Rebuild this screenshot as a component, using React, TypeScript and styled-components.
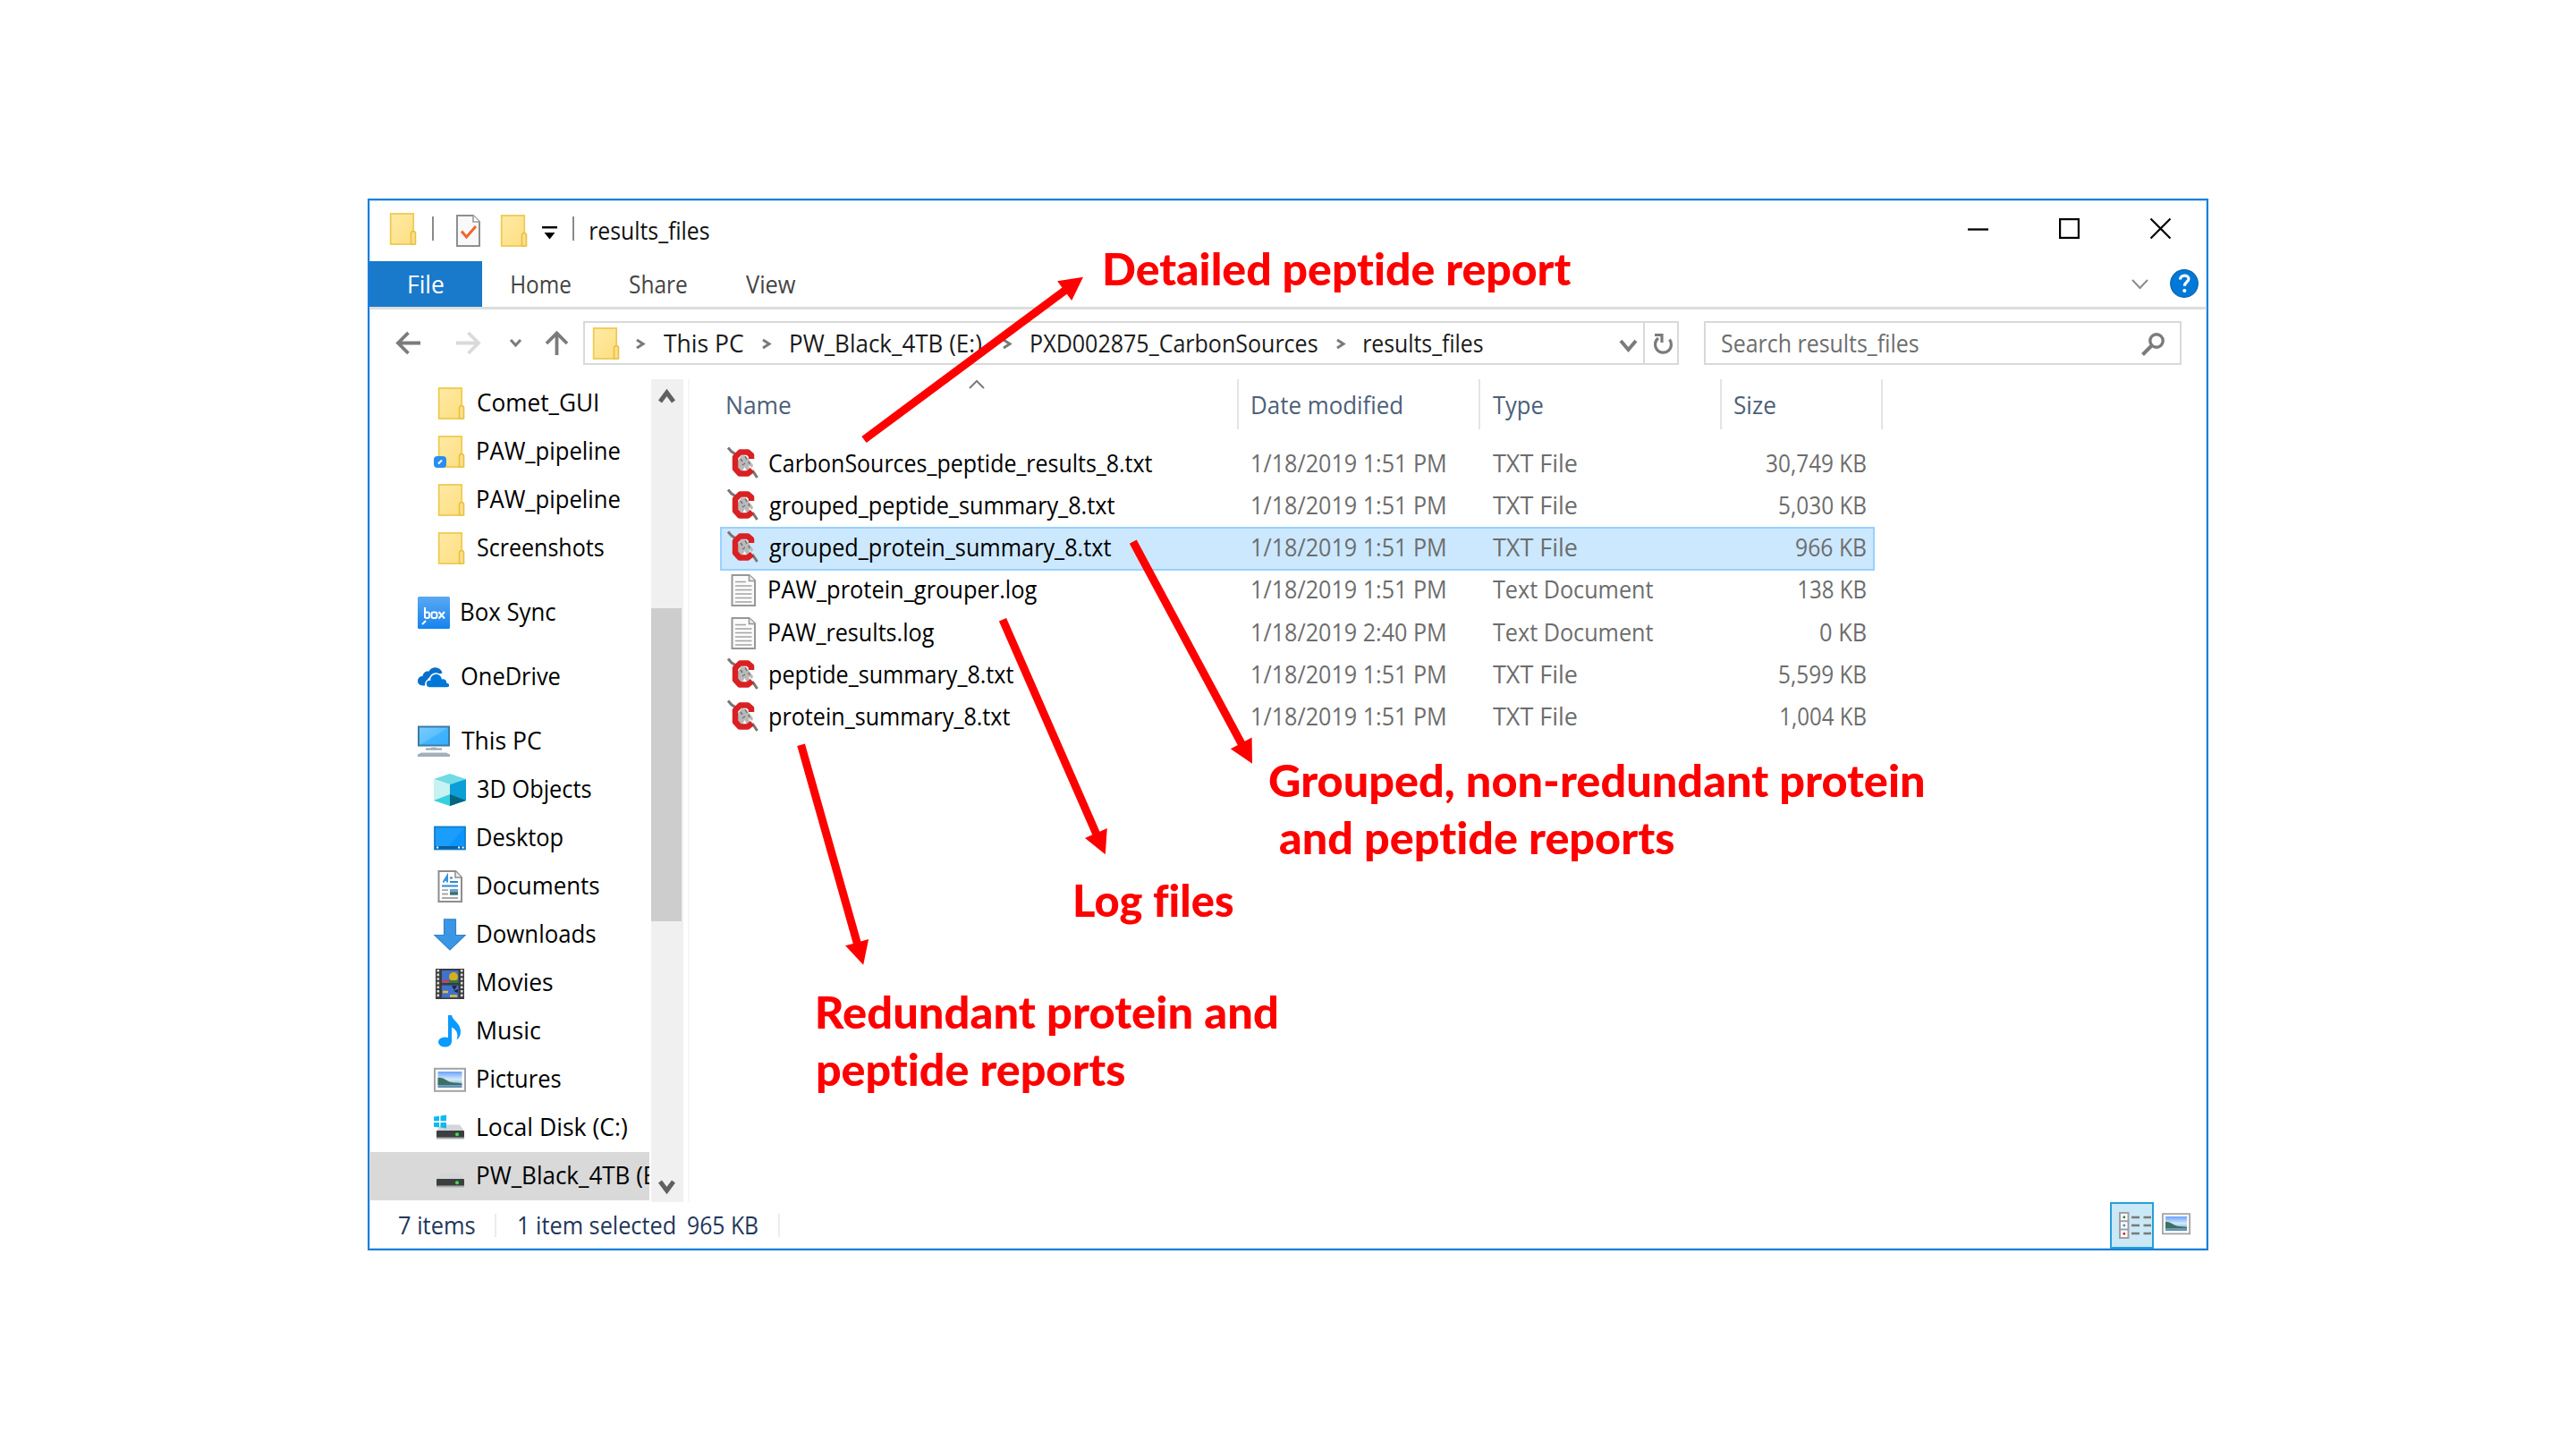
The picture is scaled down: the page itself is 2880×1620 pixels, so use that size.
import React, { useLayoutEffect, useRef, useState } from 'react';
import styled, { createGlobalStyle } from 'styled-components';

const ui = `"Open Sans", "Noto Sans", sans-serif`;

const Global = createGlobalStyle`
  html, body { margin: 0; background: #fff; }
  * { box-sizing: border-box; }
`;

/* ---------- text that is fitted to a known ink width ---------- */

const Slot = styled.span<{ $w: number; $ml?: number }>`
  display: block;
  flex: none;
  width: ${(p) => p.$w}px;
  margin-left: ${(p) => p.$ml ?? 0}px;
`;
const Ink = styled.span`
  display: inline-block;
  white-space: pre;
  transform-origin: 0 50%;
`;

function Fit({ w, ml, children }: { w: number; ml?: number; children: string }) {
  const ref = useRef<HTMLSpanElement>(null);
  const [transform, setTransform] = useState('none');
  useLayoutEffect(() => {
    const cs = getComputedStyle(ref.current!);
    const ctx = document.createElement('canvas').getContext('2d')! as CanvasRenderingContext2D & { letterSpacing: string };
    ctx.font = `${cs.fontWeight} ${cs.fontSize} ${cs.fontFamily}`;
    if (cs.letterSpacing !== 'normal') ctx.letterSpacing = cs.letterSpacing;
    const m = ctx.measureText(children);
    const scale = w / (m.actualBoundingBoxLeft + m.actualBoundingBoxRight);
    setTransform(`translateX(${m.actualBoundingBoxLeft * scale}px) scaleX(${scale})`);
  }, [w, children]);
  return (
    <Slot $w={w} $ml={ml}>
      <Ink ref={ref} style={{ transform }}>{children}</Ink>
    </Slot>
  );
}

/* ---------- layout ---------- */

const Stage = styled.div`
  position: relative;
  width: 2880px;
  height: 1620px;
  padding: 222px 0 0 411px;
  overflow: hidden;
  background: #fff;
`;
const Win = styled.div`
  width: 2058px;
  height: 1176px;
  border: 2px solid #1a80d9;
  box-shadow: inset 0 0 0 1px #c3def4;
  display: flex;
  flex-direction: column;
  font: 400 26.5px/36px ${ui};
  color: #111;
`;
const TitleBar = styled.div`
  height: 68px;
  display: flex;
  align-items: center;
  padding: 0 40px 0 18px;
`;
const Buttons = styled.div`
  margin-left: auto;
  display: flex;
  align-items: center;
  gap: 79px;
  margin-top: -5px;
`;
const TitleText = styled.div`
  margin: -1px 0 0 18px;
`;
const VBar = styled.i<{ $ml: number; $h: number; $c: string; $mt?: number }>`
  width: 2px;
  flex: none;
  height: ${(p) => p.$h}px;
  margin-left: ${(p) => p.$ml}px;
  margin-top: ${(p) => p.$mt ?? 0}px;
  background: ${(p) => p.$c};
`;
const Ribbon = styled.div`
  height: 54px;
  flex: none;
  border-bottom: 3px solid #dcdddd;
  display: flex;
  align-items: center;
  color: #444;
  padding-right: 9px;
`;
const FileTab = styled.div`
  width: 126px;
  height: 51px;
  padding-left: 44px;
  display: flex;
  align-items: center;
  background: #1979ca;
  color: #fff;
`;
const NavBar = styled.div`
  height: 78px;
  flex: none;
  display: flex;
  padding: 13px 0 0 30px;
`;
const Arrows = styled.div`
  width: 209px;
  height: 49px;
  display: flex;
  align-items: center;
`;
const Field = styled.div<{ $w: number }>`
  width: ${(p) => p.$w}px;
  height: 49px;
  border: 2px solid #d9d9d9;
  display: flex;
  align-items: center;
  flex: none;
`;
const Address = styled(Field)`
  color: #1a1a1a;
  padding-left: 4px;
`;
const Refresh = styled.div`
  margin-left: auto;
  width: 38px;
  height: 45px;
  border-left: 2px solid #d9d9d9;
  display: flex;
  align-items: center;
  justify-content: center;
`;
const Search = styled(Field)`
  margin-left: 28px;
  padding-left: 18px;
  color: #6d6d6d;
`;
const Body = styled.div`
  height: 920px;
  flex: none;
  display: flex;
`;
const Tree = styled.div`
  width: 315px;
  overflow: hidden;
`;
const TreeRow = styled.div<{ $nested: boolean; $gap: boolean; $on?: boolean }>`
  width: 313px;
  height: 54px;
  overflow: hidden;
  margin-top: ${(p) => (p.$gap ? 18 : 0)}px;
  padding-left: ${(p) => (p.$nested ? 72 : 54)}px;
  display: flex;
  align-items: center;
  gap: 13px;
  background: ${(p) => (p.$on ? '#d9d9d9' : 'transparent')};
  color: #000;
`;
const TreeLabel = styled.div`
  margin-top: -2px;
`;
const Scroll = styled.div`
  width: 36px;
  background: #f0f0f0;
  display: flex;
  flex-direction: column;
  justify-content: space-between;
  padding: 14px 0 12px;
`;
const Thumb = styled.div`
  width: 34px;
  height: 350px;
  margin: 230px 0 auto;
  background: #cdcdcd;
`;
const Pane = styled.div`
  flex: 1;
  margin-left: 5px;
  border-left: 2px solid #f6f6f6;
`;
const Head = styled.div`
  height: 70.5px;
  display: flex;
  color: #4c607a;
`;
const Col = styled.div<{ $w: number; $pl: number }>`
  width: ${(p) => p.$w}px;
  height: 56px;
  flex: none;
  padding-left: ${(p) => p.$pl}px;
  border-right: 2px solid #e4e4e4;
  display: flex;
  align-items: center;
  padding-top: 1px;
`;
const SortMark = styled.div`
  align-self: flex-start;
  margin-left: 199px;
  line-height: 0;
`;
const FileRow = styled.div<{ $on: boolean }>`
  width: 1291px;
  height: 49.25px;
  margin: 0 0 -2px 33.5px;
  border: 2px solid ${(p) => (p.$on ? '#99d1ff' : 'transparent')};
  background: ${(p) => (p.$on ? '#cce8ff' : 'transparent')};
  display: flex;
  align-items: center;
  padding-left: 6px;
  color: #6d6d6d;
`;
const Cell = styled.div<{ $w: number; $right?: boolean; $dark?: boolean }>`
  width: ${(p) => p.$w}px;
  flex: none;
  display: flex;
  justify-content: ${(p) => (p.$right ? 'flex-end' : 'flex-start')};
  color: ${(p) => (p.$dark ? '#000' : '#6d6d6d')};
  margin-top: -3px;
`;
const Status = styled.div`
  height: 52px;
  flex: none;
  display: flex;
  align-items: center;
  padding-left: 33px;
  color: #22375c;
`;
const Views = styled.div`
  margin-left: auto;
  padding-right: 18px;
  display: flex;
  align-items: center;
  gap: 9px;
`;
const ViewOn = styled.div`
  width: 49px;
  height: 52px;
  border: 2px solid #26a0da;
  background: #cbe8f6;
  display: flex;
  align-items: center;
  justify-content: flex-end;
`;
const Svg = styled.svg<{ $ml?: number; $mt?: number }>`
  display: block;
  flex: none;
  overflow: visible;
  margin-left: ${(p) => p.$ml ?? 0}px;
  margin-top: ${(p) => p.$mt ?? 0}px;
`;
const Overlay = styled.svg`
  position: absolute;
  inset: 0;
`;
const Note = styled.div<{ $x: number; $y: number }>`
  position: absolute;
  left: ${(p) => p.$x}px;
  top: ${(p) => p.$y}px;
  font: 900 48.5px/64px Lato, "Liberation Sans", sans-serif;
  letter-spacing: 0.02px;
  font-variant-ligatures: none;
  color: #f00;
`;

/* ---------- icons ---------- */

type IP = { ml?: number; mt?: number };

const Folder = ({ ml, mt, badge }: IP & { badge?: boolean }) => (
  <Svg $ml={ml} $mt={mt} width="36" height="36" viewBox="0 0 36 36">
    <defs>
      <linearGradient id="fold" x1="0" y1="0" x2="1" y2="1">
        <stop offset="0" stopColor="#ffeaa6" />
        <stop offset="1" stopColor="#fddf81" />
      </linearGradient>
    </defs>
    <rect x="5.7" y="1" width="25.5" height="34" fill="url(#fold)" stroke="#efca53" strokeWidth="1.8" />
    <path d="M28.5 35V22.5l1-1.7h3l1 1.7V35z" fill="#fbe08a" stroke="#e9bf46" strokeWidth="1.6" />
    {badge && (
      <>
        <rect x="0" y="23" width="14" height="13" rx="4" fill="#2a8df0" />
        <path d="M5 31.5l4-4" stroke="#fff" strokeWidth="2" />
      </>
    )}
  </Svg>
);
const CheckDoc = ({ ml, mt }: IP) => (
  <Svg $ml={ml} $mt={mt} width="27" height="36" viewBox="0 0 27 36">
    <path d="M1 1h18l7 7v27H1z" fill="#f8f9fa" stroke="#8f8f8f" strokeWidth="2" />
    <path d="M19 1v7h7" fill="#fff" stroke="#9a9a9a" strokeWidth="1.6" />
    <path d="M6 18.5l5.5 6.5L22 13" fill="none" stroke="#f2652a" strokeWidth="3" />
  </Svg>
);
const Chev = ({ d, w, h, c, sw, ml, mt }: IP & { d: 'u' | 'd' | 'r'; w: number; h: number; c: string; sw: number }) => {
  const pts = d === 'd' ? `1,1 ${w / 2},${h - 1} ${w - 1},1` : d === 'u' ? `1,${h - 1} ${w / 2},1 ${w - 1},${h - 1}` : `1,1 ${w - 1},${h / 2} 1,${h - 1}`;
  return (
    <Svg $ml={ml} $mt={mt} width={w} height={h}>
      <polyline points={pts} fill="none" stroke={c} strokeWidth={sw} />
    </Svg>
  );
};
const Crumb = ({ ml }: IP) => <Chev d="r" w={9} h={11} c="#7a7a7a" sw={3} ml={ml} mt={2} />;

const Dir = ({ d, c, ml }: IP & { d: string; c: string }) => (
  <Svg $ml={ml} width="27" height="27" viewBox="0 0 27 27">
    <path d={d} fill="none" stroke={c} strokeWidth="3.8" />
  </Svg>
);

const icons: Record<string, React.ReactNode> = {
  folder: <Folder />,
  folderSync: <Folder badge />,
  box: (
    <Svg width="36" height="36" viewBox="0 0 36 36">
      <defs>
        <linearGradient id="bx" x1="0" y1="0" x2="0" y2="1">
          <stop offset="0" stopColor="#5aa9f3" />
          <stop offset="1" stopColor="#1583ee" />
        </linearGradient>
      </defs>
      <rect width="36" height="36" rx="1.5" fill="url(#bx)" />
      <g fill="none" stroke="#fff" strokeWidth="2">
        <path d="M8 12v12" />
        <rect x="8" y="17.5" width="5" height="6.5" rx="2" />
        <rect x="15.5" y="17.5" width="6" height="6.5" rx="2" />
        <path d="M23.5 17l6.5 7.500M30 17l-6.500 7.500" />
      </g>
      <path d="M5 31l4-4" stroke="#fff" strokeWidth="2" />
    </Svg>
  ),
  onedrive: (
    <Svg width="36" height="24" viewBox="0 0 36 24" $mt={1}>
      <path d="M6 20.500C1 20.500 0 17 0 15.500C0 12 2.500 10 5.500 10C6 6 9 4 12.500 4.500C15 0 20 -.5 23 1C25.500 2 27 4 27.500 6.500L12 12L8 20.500z" fill="#0a6fc9" />
      <path d="M13.500 23C10 23 9 20.500 9 18.500C9 16 11 14 13.500 14C13.500 9.500 17 7 20.500 7C24 7 27 9.500 27.500 12.500C31 12 33 14.500 33 17C35 17.200 36 18.500 36 20.200C36 22 34.800 23 33 23z" fill="#0078d7" stroke="#fff" strokeWidth="1.6" />
    </Svg>
  ),
  pc: (
    <Svg width="36" height="36" viewBox="0 0 36 36">
      <defs>
        <linearGradient id="scr" x1="0" y1="0" x2="1" y2="1">
          <stop offset="0" stopColor="#7cccff" />
          <stop offset=".5" stopColor="#5cc0ff" />
          <stop offset=".52" stopColor="#43b4ff" />
          <stop offset="1" stopColor="#35aeff" />
        </linearGradient>
      </defs>
      <rect x="1" y="1.500" width="34" height="21" fill="url(#scr)" stroke="#3c7ba3" strokeWidth="2" />
      <rect x="15" y="23.500" width="6" height="3" fill="#c9d3db" />
      <rect x="9" y="25.500" width="18" height="2" fill="#8fa3b3" />
      <path d="M4 30.500h28l4 2v2.500H0V32.500z" fill="#a3afbb" />
    </Svg>
  ),
  cube: (
    <Svg width="36" height="36" viewBox="0 0 36 36">
      <path d="M18 0L36 6L18 12L0 6z" fill="#6fdbe4" />
      <path d="M0 6L18 12V36L0 30z" fill="#c8f1f1" />
      <path d="M36 6L18 12V36L36 30z" fill="#0a9fd6" />
      <path d="M18 23L36 30L18 36z" fill="#05647f" />
      <path d="M18 23L0 30L18 36z" fill="#35d2de" />
    </Svg>
  ),
  desktop: (
    <Svg width="36" height="36" viewBox="0 0 36 36">
      <rect x="1" y="5.500" width="34" height="25" fill="#1b9dfc" stroke="#0f7fce" strokeWidth="1.800" />
      <path d="M34 6.500V28H16z" fill="#0c94fa" />
      <rect x="1.800" y="27" width="32.500" height="3" fill="#0b5f9f" />
      <path d="M3 28.500h2.200M27 28.500h2.200M31.500 28.500h2.200" stroke="#fff" strokeWidth="2.200" />
    </Svg>
  ),
  documents: (
    <Svg width="36" height="36" viewBox="0 0 36 36">
      <path d="M5.500 1h19l6.500 7v27H5.500z" fill="#fff" stroke="#8d8d8d" strokeWidth="2" />
      <path d="M24 1v7h7" fill="#eee" stroke="#8d8d8d" strokeWidth="1.500" />
      <path d="M10.500 13.500l4.500-7.500v7.500M12 11h4" fill="none" stroke="#3a94d8" strokeWidth="2" />
      <path d="M18 8.500h3M18 13h9M9 17.500h18" stroke="#2d8ad4" strokeWidth="2" />
      <path d="M9 22.200h7M9 26.500h7M9 31h18" stroke="#a8a8a8" strokeWidth="1.800" />
      <rect x="18" y="21" width="9" height="6.500" fill="#6c9ed8" />
      <rect x="18" y="24.500" width="9" height="3" fill="#3d6e5b" />
    </Svg>
  ),
  downloads: (
    <Svg width="36" height="36" viewBox="0 0 36 36">
      <path d="M11.500 .8h13V18.500H35L18 35L1 18.500H11.500z" fill="#3b97e6" stroke="#3183cb" strokeWidth="1.200" />
    </Svg>
  ),
  movies: (
    <Svg width="36" height="36" viewBox="0 0 36 36">
      <rect x="2" y="2" width="32" height="34" fill="#3b3b3b" />
      <path d="M4.800 3v32M31.200 3v32" stroke="#dcdcdc" strokeWidth="2.600" strokeDasharray="2.600 2" />
      <rect x="9" y="4" width="18.500" height="14" fill="#4171cf" />
      <rect x="9" y="20.500" width="18.500" height="14" fill="#4171cf" />
      <path d="M9 14.500h8v3H9z" fill="#b5495e" />
      <circle cx="22" cy="11" r="5" fill="#d3b01c" />
      <path d="M17 15h10v3H17z" fill="#2f7d3f" />
      <path d="M20 21h6l-3 5zM22 27l5-2v4z" fill="#22263a" />
      <path d="M10 28h6M18 32.500h8" stroke="#e0c02a" strokeWidth="2.600" />
    </Svg>
  ),
  music: (
    <Svg width="36" height="36" viewBox="0 0 36 36">
      <ellipse cx="12.500" cy="30" rx="7.500" ry="5.500" fill="#0a9bff" />
      <path d="M16 0h4c1 6 10 9 10 18.500c0 4-1.800 7.500-4.500 9c1.500-4 2-10.500-5.500-14V30h-4z" fill="#0a9bff" />
    </Svg>
  ),
  pictures: (
    <Svg width="36" height="36" viewBox="0 0 36 36">
      <Photo />
    </Svg>
  ),
  disk: (
    <Svg width="36" height="36" viewBox="0 0 36 36">
      <Drive />
      <path d="M0 5.500l6-.8v5.500H0zM7.500 4.500L14 3.500v6.700H7.500zM0 12h6v5.500l-6-.8zM7.500 12H14v6.500l-6.500-1z" fill="#0fb9f2" />
    </Svg>
  ),
  drive: (
    <Svg width="36" height="36" viewBox="0 0 36 36">
      <Drive />
    </Svg>
  ),
  log: (
    <Svg width="36" height="36" viewBox="0 0 36 36" $mt={-1}>
      <path d="M5.500 1H24.500L31 7V35H5.500z" fill="#fbfbfb" stroke="#979797" strokeWidth="2" />
      <path d="M24.500 1v6.500H31" fill="#eee" stroke="#979797" strokeWidth="1.600" />
      <path d="M9 8.500h12M9 13h18.500M9 17.500h18.500M9 22h18.500M9 26.500h18.500M9 31h18.500" stroke="#a4a4a4" strokeWidth="1.700" />
    </Svg>
  ),
  txt: (
    <Svg width="36" height="36" viewBox="0 0 36 36" $mt={-5}>
      <path d="M1 1.500l4 4.500 5 3M28 27l3 4 2.500 4" fill="none" stroke="#7d7474" strokeWidth="3" />
      <path d="M12 16l4-6 5 1 5 6 3 4-1 3-4-3 2 7-8 3-6-5z" fill="#b9b9b9" />
      <path d="M15 14l2 3M20 11l2 4M24 17l1 3M17 21l3-2" stroke="#6f6f6f" strokeWidth="1.400" />
      <path d="M17 28l2.500-5 2.500 5z" fill="#fff" />
      <path d="M27 14V10L23 6.500H14.500L9 12V25L14 30.500H23L28 26.500" fill="none" stroke="#d92023" strokeWidth="6.500" strokeLinejoin="round" />
    </Svg>
  ),
};

function Photo() {
  return (
    <>
      <defs>
        <linearGradient id="sky" x1="0" y1="0" x2="0" y2="1">
          <stop offset="0" stopColor="#6aa2fb" />
          <stop offset=".5" stopColor="#d5ebfb" />
          <stop offset="1" stopColor="#4f86ad" />
        </linearGradient>
      </defs>
      <rect x="1" y="5.800" width="34" height="25" fill="#fff" stroke="#a3a3a3" strokeWidth="2" />
      <rect x="4.500" y="9" width="27" height="18" fill="url(#sky)" />
      <path d="M4.500 16c5-1 9 3 13 4.500s9 1 14 2v1.500H4.500z" fill="#3d6f62" />
    </>
  );
}
function Drive() {
  return (
    <>
      <path d="M8 14.500h21l5 7H3z" fill="#d3d5d7" />
      <rect x="3" y="21" width="31" height="8.500" rx="1" fill="#3c3f40" />
      <rect x="3" y="28.500" width="31" height="2" fill="#a9adb0" />
      <circle cx="26" cy="25.200" r="2" fill="#45dc4e" />
    </>
  );
}

/* ---------- data ---------- */

const tree: [string, string, number, boolean, boolean][] = [
  ['folder', 'Comet_GUI', 134, true, false],
  ['folderSync', 'PAW_pipeline', 159, true, false],
  ['folder', 'PAW_pipeline', 159, true, false],
  ['folder', 'Screenshots', 141, true, false],
  ['box', 'Box Sync', 105, false, true],
  ['onedrive', 'OneDrive', 110, false, true],
  ['pc', 'This PC', 89, false, true],
  ['cube', '3D Objects', 127, true, false],
  ['desktop', 'Desktop', 95, true, false],
  ['documents', 'Documents', 136, true, false],
  ['downloads', 'Downloads', 132, true, false],
  ['movies', 'Movies', 84, true, false],
  ['music', 'Music', 70, true, false],
  ['pictures', 'Pictures', 93, true, false],
  ['disk', 'Local Disk (C:)', 167, true, false],
  ['drive', 'PW_Black_4TB (E:)', 213, true, false],
];

const files: [string, string, number, string, string, string, number][] = [
  ['txt', 'CarbonSources_peptide_results_8.txt', 428, '1/18/2019 1:51 PM', 'TXT File', '30,749 KB', 111],
  ['txt', 'grouped_peptide_summary_8.txt', 386, '1/18/2019 1:51 PM', 'TXT File', '5,030 KB', 97],
  ['txt', 'grouped_protein_summary_8.txt', 382, '1/18/2019 1:51 PM', 'TXT File', '966 KB', 78],
  ['log', 'PAW_protein_grouper.log', 299, '1/18/2019 1:51 PM', 'Text Document', '138 KB', 75],
  ['log', 'PAW_results.log', 184, '1/18/2019 2:40 PM', 'Text Document', '0 KB', 51],
  ['txt', 'peptide_summary_8.txt', 272, '1/18/2019 1:51 PM', 'TXT File', '5,599 KB', 97],
  ['txt', 'protein_summary_8.txt', 268, '1/18/2019 1:51 PM', 'TXT File', '1,004 KB', 95],
];

const arrows = [
  [966, 491.5, 1211, 309.7],
  [895.6, 832.7, 965.2, 1078.7],
  [1121, 692.7, 1235.8, 955.3],
  [1266.8, 605.7, 1400, 853.7],
];

function Arrow({ a }: { a: number[] }) {
  const [x1, y1, x2, y2] = a;
  const len = Math.hypot(x2 - x1, y2 - y1);
  const deg = (Math.atan2(y2 - y1, x2 - x1) * 180) / Math.PI;
  return (
    <path
      d={`M0 -4.500H${len - 26}V-13.500L${len} 0L${len - 26} 13.500V4.500H0z`}
      fill="#f00"
      transform={`translate(${x1} ${y1}) rotate(${deg})`}
    />
  );
}

export default function App() {
  return (
    <Stage>
      <Global />
      <Win>
        <TitleBar>
          <Folder mt={-4} />
          <VBar $ml={16} $h={27} $c="#8a8a8a" $mt={-6} />
          <CheckDoc ml={25} />
          <Folder ml={18} />
          <Svg $ml={15} $mt={4} width="17" height="15" viewBox="0 0 17 15">
            <path d="M0 1.200h17" stroke="#000" strokeWidth="2.500" />
            <path d="M2.500 7h12L8.500 14.500z" fill="#000" />
          </Svg>
          <VBar $ml={17} $h={27} $c="#8a8a8a" $mt={-6} />
          <TitleText><Fit w={133}>results_files</Fit></TitleText>
          <Buttons>
            <Svg width="23" height="23"><path d="M0 12.500h23" stroke="#000" strokeWidth="2.300" /></Svg>
            <Svg width="23" height="23"><rect x="1.100" y="1.100" width="20.800" height="20.800" fill="none" stroke="#000" strokeWidth="2.200" /></Svg>
            <Svg width="23" height="23"><path d="M0.500 .5l22 22M22.500 .5l-22 22" stroke="#000" strokeWidth="2.200" /></Svg>
          </Buttons>
        </TitleBar>
        <Ribbon>
          <FileTab><Fit w={39}>File</Fit></FileTab>
          <Fit w={66} ml={33}>Home</Fit>
          <Fit w={64} ml={66}>Share</Fit>
          <Fit w={56} ml={66}>View</Fit>
          <Chev d="d" w={19} h={11} c="#8c8c8c" sw={2} ml={1493} />
          <Svg $ml={24} $mt={-2} width="32" height="32" viewBox="0 0 32 32">
            <circle cx="16" cy="16" r="15.300" fill="#0078d7" stroke="#0b62ab" strokeWidth="1.200" />
            <path d="M11.500 11.500c0-6 9.500-5.500 9.500-.8c0 3.600-4.600 3.700-4.600 8" fill="none" stroke="#fff" strokeWidth="3.200" />
            <circle cx="16.300" cy="24" r="2.100" fill="#fff" />
          </Svg>
        </Ribbon>
        <NavBar>
          <Arrows>
            <Dir c="#7b7b7b" d="M27 13.500H2.500M13.500 2L2 13.500L13.500 25" />
            <Dir c="#dadada" ml={40} d="M0 13.500H24.500M13.500 2L25 13.500L13.500 25" />
            <Chev d="d" w={13} h={8} c="#7b7b7b" sw={3} ml={33} mt={-2} />
            <Dir c="#7b7b7b" ml={26} d="M13.500 27V2.500M2 14L13.500 2.500L25 14" />
          </Arrows>
          <Address $w={1225}>
            <Folder ml={0} />
            <Crumb ml={17} />
            <Fit w={89} ml={22}>This PC</Fit>
            <Crumb ml={21} />
            <Fit w={213} ml={23}>PW_Black_4TB (E:)</Fit>
            <Crumb ml={24} />
            <Fit w={320} ml={23}>PXD002875_CarbonSources</Fit>
            <Crumb ml={21} />
            <Fit w={133} ml={22}>results_files</Fit>
            <Chev d="d" w={19} h={12} c="#7b7b7b" sw={4} ml={153} mt={5} />
            <Refresh>
              <Svg width="24" height="26" viewBox="0 0 24 26" $ml={3} $mt={3}>
                <path d="M19.500 7.500A9 9 0 1 1 7 6M3 2.500H11V11" fill="none" stroke="#7b7b7b" strokeWidth="3.200" />
              </Svg>
            </Refresh>
          </Address>
          <Search $w={534}>
            <Fit w={220}>Search results_files</Fit>
            <Svg $ml={249} $mt={2} width="27" height="26" viewBox="0 0 27 26">
              <circle cx="17" cy="9" r="7.200" fill="none" stroke="#7b7b7b" strokeWidth="3.400" />
              <path d="M12 14L1.500 24.500" stroke="#7b7b7b" strokeWidth="4" />
            </Svg>
          </Search>
        </NavBar>
        <Body>
          <Tree>
            {tree.map(([ic, label, w, nested, gap], i) => (
              <TreeRow key={i} $nested={nested} $gap={gap} $on={ic === 'drive'}>
                {icons[ic]}
                <TreeLabel><Fit w={w}>{label}</Fit></TreeLabel>
              </TreeRow>
            ))}
          </Tree>
          <Scroll>
            <Chev d="u" w={17} h={12} c="#606060" sw={5} ml={9} />
            <Thumb />
            <Chev d="d" w={17} h={12} c="#606060" sw={5} ml={9} />
          </Scroll>
          <Pane>
            <Head>
              <Col $w={614} $pl={42}>
                <Fit w={71}>Name</Fit>
                <SortMark><Chev d="u" w={18} h={10} c="#7c7c7c" sw={2} /></SortMark>
              </Col>
              <Col $w={270} $pl={15}><Fit w={167}>Date modified</Fit></Col>
              <Col $w={270} $pl={14}><Fit w={56}>Type</Fit></Col>
              <Col $w={180} $pl={14}><Fit w={46}>Size</Fit></Col>
            </Head>
            {files.map(([ic, name, w, date, type, size, sw], i) => (
              <FileRow key={name} $on={i === 2}>
                {icons[ic]}
                <Cell $w={550} $dark><Fit w={w} ml={name.startsWith('p') ? 12 : 11}>{name}</Fit></Cell>
                <Cell $w={270}><Fit w={216} ml={1}>{date}</Fit></Cell>
                <Cell $w={270}><Fit w={type === 'TXT File' ? 94 : 179}>{type}</Fit></Cell>
                <Cell $w={147} $right><Fit w={sw}>{size}</Fit></Cell>
              </FileRow>
            ))}
          </Pane>
        </Body>
        <Status>
          <Fit w={85}>7 items</Fit>
          <VBar $ml={22} $h={26} $c="#ececec" />
          <Fit w={174} ml={25}>1 item selected</Fit>
          <Fit w={78} ml={15}>965 KB</Fit>
          <VBar $ml={23} $h={26} $c="#ececec" />
          <Views>
            <ViewOn>
              <Svg width="37" height="30" viewBox="0 0 37 30">
                <path d="M1 1h9.500v28H1zM1 10.300h9.500M1 19.600h9.500" fill="#fff" stroke="#a0a0a0" strokeWidth="2" />
                <rect x="4.500" y="4.500" width="2.600" height="2.600" fill="#3d7a5c" />
                <rect x="4.500" y="13.700" width="2.600" height="2.600" fill="#3d8df5" />
                <rect x="4.500" y="23" width="2.600" height="2.600" fill="#d42a2a" />
                <path d="M14 6h9M27.500 6H36M14 15h9M27.500 15H36M14 24h9M27.500 24H36" stroke="#7a7a7a" strokeWidth="2.300" />
              </Svg>
            </ViewOn>
            <Svg width="32" height="32" viewBox="0 0 36 36" $mt={-4}><Photo /></Svg>
          </Views>
        </Status>
      </Win>
      <Overlay width="2880" height="1620">
        {arrows.map((a, i) => <Arrow key={i} a={a} />)}
      </Overlay>
      <Note $x={1235} $y={268}><Fit w={522}>Detailed peptide report</Fit></Note>
      <Note $x={1419} $y={840}>
        <Fit w={731}>Grouped, non-redundant protein</Fit>
        <Fit w={441} ml={12}>and peptide reports</Fit>
      </Note>
      <Note $x={1202} $y={974}><Fit w={177}>Log files</Fit></Note>
      <Note $x={914} $y={1099}>
        <Fit w={513}>Redundant protein and</Fit>
        <Fit w={344}>peptide reports</Fit>
      </Note>
    </Stage>
  );
}
